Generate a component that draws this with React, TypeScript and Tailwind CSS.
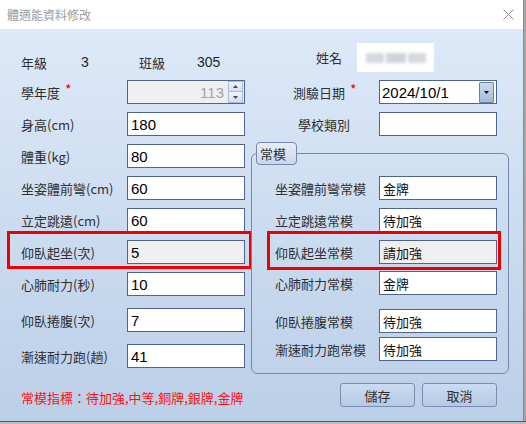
import React from "react";

const LBL = "text-[13px] leading-none text-[#303030] whitespace-nowrap";

function Field({
  value,
  gray,
  cjk,
}: {
  value?: string;
  gray?: boolean;
  cjk?: boolean;
}) {
  return (
    <div
      className={`w-[118px] h-[24px] border border-[#4d6590] flex items-center pl-[3px] ${
        gray ? "bg-[#efefef]" : "bg-white"
      }`}
    >
      <span
        className={
          cjk
            ? "text-[13px] leading-none text-[#111]"
            : "text-[15px] leading-none text-black font-['Liberation_Sans','Noto_Sans_CJK_TC',sans-serif]"
        }
      >
        {value}
      </span>
    </div>
  );
}

function Star() {
  return <span className="text-[#e8000b] text-[14px] leading-none relative -top-[3px] ml-[5px]">*</span>;
}

function RedBox({ className }: { className: string }) {
  return <div className={`absolute border-[3px] border-[#ee0000] pointer-events-none ${className}`} />;
}

function LeftRow({
  label,
  value,
  mt,
  gray,
  children,
}: {
  label: React.ReactNode;
  value?: string;
  mt: string;
  gray?: boolean;
  children?: React.ReactNode;
}) {
  return (
    <div className={`relative flex items-center h-[24px] ${mt}`}>
      <div className={`w-[106px] ${LBL}`}>{label}</div>
      <Field value={value} gray={gray} />
      {children}
    </div>
  );
}

function NormRow({
  label,
  value,
  mt,
  gray,
  children,
}: {
  label: string;
  value: string;
  mt: string;
  gray?: boolean;
  children?: React.ReactNode;
}) {
  return (
    <div className={`relative flex items-center h-[24px] ${mt}`}>
      <div className={`w-[104px] ${LBL}`}>{label}</div>
      <Field value={value} gray={gray} cjk />
      {children}
    </div>
  );
}

function Btn({ children }: { children: React.ReactNode }) {
  return (
    <button className="w-[75px] h-[24px] rounded-[3px] border border-[#7b8eb2] bg-gradient-to-b from-[#cadcf2] to-[#b5c9e4] text-[13px] leading-none text-[#303030] flex items-center justify-center">
      {children}
    </button>
  );
}

export default function App() {
  return (
    <div className="w-[526px] h-[424px] overflow-hidden bg-[#c4c4c4] flex flex-col font-['Noto_Sans_CJK_TC',sans-serif]">
      <div className="flex h-[421px]">
        <div className="w-[523px] flex flex-col">
          {/* Title bar */}
          <div className="h-[29px] bg-white flex items-center justify-between pl-[7px] pr-[9px]">
            <span className="text-[12px] leading-none text-[#9d9d9d]">體適能資料修改</span>
            <svg width="11" height="11" viewBox="0 0 11 11">
              <path d="M0.5 0.5 L10.5 10.5 M10.5 0.5 L0.5 10.5" stroke="#8c8c8c" strokeWidth="1" />
            </svg>
          </div>

          {/* Body */}
          <div className="flex-1 bg-gradient-to-b from-[#dde9f8] to-[#bbcfe8] flex">
            {/* Left column */}
            <div className="ml-[21px] mt-[21px] w-[230px] flex flex-col">
              <div className="flex items-center h-[24px]">
                <span className={`w-[60px] ${LBL}`}>年級</span>
                <span className="w-[58px] text-[14px] leading-none text-[#1f1f1f] font-['Liberation_Sans',sans-serif]">3</span>
                <span className={`w-[58px] ${LBL}`}>班級</span>
                <span className="text-[14px] leading-none text-[#1f1f1f] font-['Liberation_Sans',sans-serif]">305</span>
              </div>

              <div className="flex items-center h-[24px] mt-[6px]">
                <div className={`w-[106px] ${LBL} flex items-center`}>
                  學年度
                  <Star />
                </div>
                <div className="w-[118px] h-[24px] border border-[#4d6590] bg-[#efefef] flex items-center">
                  <span className="flex-1 text-right pr-[4px] text-[15px] leading-none text-[#a3a3a3] font-['Liberation_Sans',sans-serif]">
                    113
                  </span>
                  <div className="w-[15px] h-[22px] mr-[1px] flex flex-col">
                    <div className="h-[11px] border border-[#a9bcd8] bg-gradient-to-b from-[#eef4fb] to-[#d3e0f1] flex items-center justify-center">
                      <svg width="5" height="3" viewBox="0 0 5 3">
                        <path d="M2.5 0 L5 3 L0 3 Z" fill="#4a4a4a" />
                      </svg>
                    </div>
                    <div className="h-[11px] border border-t-0 border-[#a9bcd8] bg-gradient-to-b from-[#eef4fb] to-[#d3e0f1] flex items-center justify-center">
                      <svg width="5" height="3" viewBox="0 0 5 3">
                        <path d="M0 0 L5 0 L2.5 3 Z" fill="#4a4a4a" />
                      </svg>
                    </div>
                  </div>
                </div>
              </div>

              <LeftRow label="身高(cm)" value="180" mt="mt-[8px]" />
              <LeftRow label="體重(kg)" value="80" mt="mt-[8px]" />
              <LeftRow label="坐姿體前彎(cm)" value="60" mt="mt-[8px]" />
              <LeftRow label="立定跳遠(cm)" value="60" mt="mt-[8px]" />
              <LeftRow label="仰臥起坐(次)" value="5" mt="mt-[8px]" gray>
                <RedBox className="-left-[14px] -top-[9px] w-[245px] h-[38px]" />
              </LeftRow>
              <LeftRow label="心肺耐力(秒)" value="10" mt="mt-[8px]" />
              <LeftRow label="仰臥捲腹(次)" value="7" mt="mt-[12px]" />
              <LeftRow label="漸速耐力跑(趟)" value="41" mt="mt-[12px]" />

              <div className="mt-[21px] h-[16px] flex items-center text-[13px] leading-none text-[#ff1010] whitespace-nowrap">
                常模指標：待加強,中等,銅牌,銀牌,金牌
              </div>
            </div>

            {/* Right column */}
            <div className="mt-[14px] w-[258px] flex flex-col">
              <div className="flex items-center h-[29px]">
                <span className={`ml-[65px] ${LBL}`}>姓名</span>
                <div className="ml-[15px] w-[77px] h-[29px] bg-white flex items-center justify-center gap-[2px]">
                  <div className="w-[18px] h-[10px] bg-[#d6d9e0] blur-[1.5px]" />
                  <div className="w-[20px] h-[10px] bg-[#cfd3db] blur-[1.5px]" />
                  <div className="w-[18px] h-[10px] bg-[#d6d9e0] blur-[1.5px]" />
                </div>
              </div>

              <div className="flex items-center h-[24px] mt-[8px]">
                <div className={`w-[128px] pl-[42px] ${LBL} flex items-center`}>
                  測驗日期
                  <Star />
                </div>
                <div className="w-[118px] h-[24px] border border-[#4d6590] bg-white flex items-center pl-[2px]">
                  <span className="flex-1 text-[15px] leading-none text-black font-['Liberation_Sans',sans-serif]">
                    2024/10/1
                  </span>
                  <div className="w-[15px] h-[21px] mr-[2px] border border-[#6a82aa] rounded-[1px] bg-gradient-to-b from-[#cbdaee] to-[#a4bad9] flex items-center justify-center">
                    <svg width="5" height="3" viewBox="0 0 5 3">
                      <path d="M0 0 L5 0 L2.5 3 Z" fill="#111" />
                    </svg>
                  </div>
                </div>
              </div>

              <div className="flex items-center h-[24px] mt-[8px]">
                <div className={`w-[128px] pl-[47px] ${LBL}`}>學校類別</div>
                <Field />
              </div>

              {/* Group box */}
              <div className="relative mt-[17px] border border-[#7489ad] rounded-[6px] pt-[22px] pb-[12px] pl-[23px]">
                <div className="absolute left-[4px] -top-[12px] w-[41px] h-[23px] rounded-[4px] border border-[#7489ad] bg-gradient-to-b from-[#e6eef9] to-[#c8d7ec] flex items-center pl-[3px]">
                  <span className="text-[13px] leading-none text-[#303030]">常模</span>
                </div>
                <NormRow label="坐姿體前彎常模" value="金牌" mt="" />
                <NormRow label="立定跳遠常模" value="待加強" mt="mt-[8px]" />
                <NormRow label="仰臥起坐常模" value="請加強" mt="mt-[8px]" gray>
                  <RedBox className="-left-[8px] -top-[9px] w-[234px] h-[39px]" />
                </NormRow>
                <NormRow label="心肺耐力常模" value="金牌" mt="mt-[7px]" />
                <NormRow label="仰臥捲腹常模" value="待加強" mt="mt-[14px]" />
                <NormRow label="漸速耐力跑常模" value="待加強" mt="mt-[4px]" />
              </div>

              <div className="mt-[9px] flex justify-end gap-[7px] pr-[12px]">
                <Btn>儲存</Btn>
                <Btn>取消</Btn>
              </div>
            </div>
          </div>
        </div>
        <div className="w-[3px] bg-[#a6a6a6] border-l border-[#8a8a8a]" />
      </div>
      <div className="h-[3px] bg-[#bdbdbd] border-t border-[#5a5a5a]" />
    </div>
  );
}
